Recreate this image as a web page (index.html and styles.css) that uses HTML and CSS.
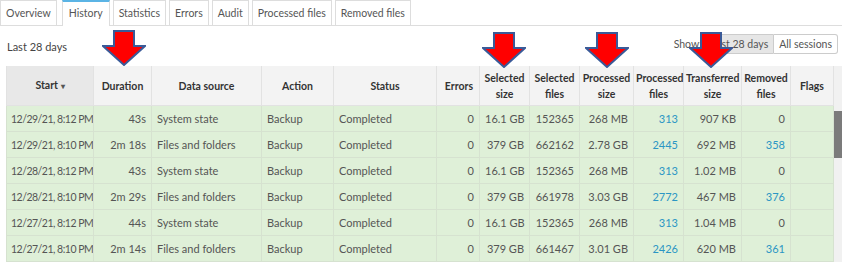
FILE: index.html
```html
<!DOCTYPE html>
<html lang="en">
<head>
    <meta charset="UTF-8">
    <meta name="viewport" content="width=device-width, initial-scale=1.0">
    <title>History</title>
    <link rel="stylesheet" href="styles.css">
</head>
<body>
    <div class="page">
        <!-- tabs -->
        <ul class="tabs">
            <li class="tab">Overview</li>
            <li class="tab active">History</li>
            <li class="tab">Statistics</li>
            <li class="tab">Errors</li>
            <li class="tab">Audit</li>
            <li class="tab">Processed files</li>
            <li class="tab">Removed files</li>
        </ul>

        <div class="toolbar">
            <span class="period">Last 28 days</span>
            <div class="show">
                <span class="show-label">Show:</span>
                <div class="btn-group">
                    <button class="btn selected">Last 28 days</button>
                    <button class="btn">All sessions</button>
                </div>
            </div>
        </div>

        <div class="table-wrap">
            <table class="history">
                <colgroup>
                    <col style="width:87px"><col style="width:58px"><col style="width:110px">
                    <col style="width:72px"><col style="width:103px"><col style="width:43px">
                    <col style="width:50px"><col style="width:50px"><col style="width:54px">
                    <col style="width:50px"><col style="width:58px"><col style="width:49px">
                    <col style="width:43px">
                </colgroup>
                <thead>
                    <tr>
                        <th class="sorted">Start <span class="caret">&#9662;</span></th>
                        <th>Duration</th>
                        <th>Data source</th>
                        <th>Action</th>
                        <th>Status</th>
                        <th class="num-head">Errors</th>
                        <th>Selected<br>size</th>
                        <th>Selected<br>files</th>
                        <th>Processed<br>size</th>
                        <th>Processed<br>files</th>
                        <th>Transferred<br>size</th>
                        <th>Removed<br>files</th>
                        <th>Flags</th>
                    </tr>
                </thead>
                <tbody id="rows"></tbody>
            </table>
            <div class="scrollbar"><div class="thumb"></div></div>
        </div>

        <!-- red arrows -->
        <svg class="arrow arrow-1" width="44" height="36" viewBox="0 0 44 36"><polygon points="12,1 32,1 32,16 43,16 22,35 1,16 12,16"/></svg>
        <svg class="arrow arrow-2" width="44" height="36" viewBox="0 0 44 36"><polygon points="12,1 32,1 32,16 43,16 22,35 1,16 12,16"/></svg>
        <svg class="arrow arrow-3" width="44" height="36" viewBox="0 0 44 36"><polygon points="12,1 32,1 32,16 43,16 22,35 1,16 12,16"/></svg>
        <svg class="arrow arrow-4" width="44" height="36" viewBox="0 0 44 36"><polygon points="12,1 32,1 32,16 43,16 22,35 1,16 12,16"/></svg>
    </div>

    <script>
        const sessions = [
            ['12/29/21, 8:12 PM', '43s', 'System state', '16.1 GB', '152365', '268 MB', '313', '907 KB', '0'],
            ['12/29/21, 8:10 PM', '2m 18s', 'Files and folders', '379 GB', '662162', '2.78 GB', '2445', '692 MB', '358'],
            ['12/28/21, 8:12 PM', '43s', 'System state', '16.1 GB', '152365', '268 MB', '313', '1.02 MB', '0'],
            ['12/28/21, 8:10 PM', '2m 29s', 'Files and folders', '379 GB', '661978', '3.03 GB', '2772', '467 MB', '376'],
            ['12/27/21, 8:12 PM', '44s', 'System state', '16.1 GB', '152365', '268 MB', '313', '1.04 MB', '0'],
            ['12/27/21, 8:10 PM', '2m 14s', 'Files and folders', '379 GB', '661467', '3.01 GB', '2426', '620 MB', '361']
        ];

        const tbody = document.getElementById('rows');
        sessions.forEach((s) => {
            const removed = s[8] === '0' ? s[8] : `<a href="#">${s[8]}</a>`;
            const tr = document.createElement('tr');
            tr.innerHTML = `
                <td class="date">${s[0]}</td>
                <td class="num">${s[1]}</td>
                <td>${s[2]}</td>
                <td>Backup</td>
                <td>Completed</td>
                <td class="num">0</td>
                <td class="num">${s[3]}</td>
                <td class="num">${s[4]}</td>
                <td class="num">${s[5]}</td>
                <td class="num"><a href="#">${s[6]}</a></td>
                <td class="num">${s[7]}</td>
                <td class="num">${removed}</td>
                <td></td>
            `;
            tbody.appendChild(tr);
        });
    </script>
</body>
</html>
```

FILE: styles.css
```css
body {
    margin: 0;
    font-family: "Lato", "Liberation Sans", sans-serif;
    font-size: 11px;
    color: #555;
    background-color: #fff;
    overflow: hidden;
}

.page {
    position: relative;
}

/* tabs */
.tabs {
    display: flex;
    gap: 3px;
    margin: 0;
    padding: 0;
    list-style: none;
    border-bottom: 1px solid #ddd;
    height: 25px;
}

.tab {
    height: 25px;
    box-sizing: border-box;
    padding: 0 5px;
    line-height: 24px;
    font-size: 10.5px;
    border: 1px solid #ddd;
    border-bottom: none;
    background-color: #fff;
    color: #555;
    white-space: nowrap;
}

.tab.active {
    border-top: 2px solid #5bb4e5;
    height: 26px;
    line-height: 22px;
    margin-left: 2px;
    padding: 0 6px;
}

/* toolbar */
.toolbar {
    display: flex;
    justify-content: space-between;
    align-items: flex-start;
    height: 40px;
    box-sizing: border-box;
    padding: 8px 4px 0 7px;
}

.period {
    margin-top: 6px;
    color: #444;
}

.show {
    display: flex;
    align-items: center;
    gap: 3px;
}

.show-label {
    color: #555;
    font-size: 10.5px;
}

.btn-group {
    display: flex;
}

.btn {
    font-family: inherit;
    font-size: 10.5px;
    color: #555;
    background-color: #fff;
    border: 1px solid #ccc;
    height: 20px;
    padding: 0 5px;
    cursor: pointer;
}

.btn:first-child {
    border-radius: 3px 0 0 3px;
}

.btn:last-child {
    border-left: none;
    border-radius: 0 3px 3px 0;
}

.btn.selected {
    background-color: #e6e6e6;
}

/* table */
.table-wrap {
    display: flex;
    padding-left: 6px;
}

.history {
    table-layout: fixed;
    width: 827px;
    border-collapse: collapse;
}

.history th {
    height: 39px;
    padding: 0 2px;
    background-color: #f3f3f3;
    color: #333;
    font-size: 10.5px;
    font-weight: bold;
    text-align: center;
    line-height: 16px;
    border: 1px solid #e2e2e2;
    border-top: none;
}

.history th.sorted {
    background-color: #e8e8e8;
}

.history th.num-head {
    text-align: right;
    padding-right: 6px;
}

.caret {
    font-size: 8px;
    color: #555;
}

.history td {
    height: 25px;
    padding: 0 5px;
    background-color: #dff0d8;
    border: 1px solid #d6e2d0;
    white-space: nowrap;
    overflow: hidden;
}

.history td.date {
    padding: 0 2px 0 4px;
    font-size: 10.5px;
    letter-spacing: -0.5px;
}

.history td.num {
    text-align: right;
}

.history a {
    color: #2b96c4;
    text-decoration: none;
}

.scrollbar {
    width: 9px;
    background-color: #f1f1f1;
}

.thumb {
    margin-top: 45px;
    height: 47px;
    background-color: #7b7b7b;
}

/* annotation arrows */
.arrow {
    position: absolute;
}

.arrow polygon {
    fill: #ff0000;
    stroke: #3a5a98;
    stroke-width: 2;
    stroke-linejoin: miter;
}

.arrow-1 {
    left: 102px;
    top: 30px;
}

.arrow-2 {
    left: 482px;
    top: 32px;
}

.arrow-3 {
    left: 585px;
    top: 32px;
}

.arrow-4 {
    left: 689px;
    top: 32px;
}
```
